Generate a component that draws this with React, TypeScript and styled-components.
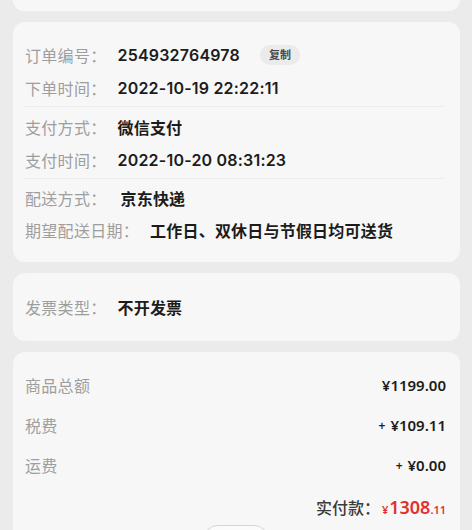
import styled, { createGlobalStyle } from "styled-components";

const GlobalStyle = createGlobalStyle`
  html, body {
    margin: 0;
    padding: 0;
    background: #ebebeb;
  }
  body {
    font-family: "Noto Sans", "Noto Sans CJK SC", sans-serif;
    -webkit-font-smoothing: antialiased;
  }
`;

type Row = { label: string; value: string; copy?: boolean; shift?: number };

const orderGroups: Row[][] = [
  [
    { label: "订单编号：", value: "254932764978", copy: true },
    { label: "下单时间：", value: "2022-10-19 22:22:11" },
  ],
  [
    { label: "支付方式：", value: "微信支付" },
    { label: "支付时间：", value: "2022-10-20 08:31:23" },
  ],
  [
    { label: "配送方式：", value: "京东快递", shift: 3 },
    { label: "期望配送日期：", value: "工作日、双休日与节假日均可送货" },
  ],
];

const fees = [
  { label: "商品总额", value: "¥1199.00" },
  { label: "税费", value: "¥109.11", plus: true },
  { label: "运费", value: "¥0.00", plus: true },
];

function App() {
  return (
    <>
      <GlobalStyle />
      <Page>
        <TopCard />

        <Card $pad="16px 16px 16px 12px">
          {orderGroups.map((group, gi) => (
            <Group key={gi} $divided={gi > 0}>
              {group.map((row) => (
                <InfoRow key={row.label} $h={gi === 2 ? 32 : 33}>
                  <Label>{row.label}</Label>
                  <Value $shift={row.shift}>{row.value}</Value>
                  {row.copy && <CopyTag>复制</CopyTag>}
                </InfoRow>
              ))}
            </Group>
          ))}
        </Card>

        <Card $pad="17px 16px 17px 12px">
          <InfoRow $h={34}>
            <Label>发票类型：</Label>
            <Value>不开发票</Value>
          </InfoRow>
        </Card>

        <Card $pad="13px 14px 0 12px">
          {fees.map((f) => (
            <FeeRow key={f.label}>
              <Label>{f.label}</Label>
              <FeeValue>
                {f.plus && <Plus>+</Plus>}
                {f.value}
              </FeeValue>
            </FeeRow>
          ))}
          <TotalRow>
            <TotalLabel>实付款：</TotalLabel>
            <Price>
              <Yen>¥</Yen>
              <Int>1308</Int>
              <Dec>.11</Dec>
            </Price>
          </TotalRow>
          <Actions>
            <OutlineButton aria-label="操作" />
          </Actions>
        </Card>
      </Page>
    </>
  );
}

const Page = styled.div`
  display: flex;
  flex-direction: column;
  gap: 11px;
  padding: 0 12px 0 13px;
  height: 530px;
  overflow: hidden;
`;

const TopCard = styled.div`
  height: 11px;
  flex-shrink: 0;
  background: #f7f7f7;
  border-radius: 0 0 12px 12px;
`;

const Card = styled.section<{ $pad: string }>`
  flex-shrink: 0;
  background: #f7f7f7;
  border-radius: 12px;
  padding: ${({ $pad }) => $pad};
`;

const Group = styled.div<{ $divided?: boolean }>`
  ${({ $divided }) =>
    $divided &&
    `
    margin-top: 2px;
    padding-top: 3px;
    border-top: 1px solid #ececec;
  `}
`;

const InfoRow = styled.div<{ $h: number }>`
  display: flex;
  align-items: center;
  height: ${({ $h }) => $h}px;
`;

const Label = styled.span`
  color: #9e9e9e;
  font-size: 16px;
  letter-spacing: 0.3px;
  white-space: nowrap;
`;

const Value = styled.span<{ $shift?: number }>`
  margin-left: ${({ $shift = 0 }) => 11 + $shift}px;
  color: #1c1c1c;
  font-family: Inter, "Noto Sans CJK SC", sans-serif;
  font-size: 16px;
  font-weight: 600;
  letter-spacing: 0.2px;
  white-space: nowrap;
`;

const CopyTag = styled.span`
  margin-left: 20px;
  padding: 0 9px;
  height: 20px;
  line-height: 20px;
  border-radius: 10px;
  background: #ebebeb;
  color: #4a4a4a;
  font-size: 11px;
  font-weight: 600;
`;

const FeeRow = styled.div`
  display: flex;
  align-items: center;
  justify-content: space-between;
  height: 40px;
`;

const FeeValue = styled.span`
  color: #1c1c1c;
  font-size: 15px;
  font-weight: 600;
`;

const Plus = styled.span`
  font-size: 12px;
  margin-right: 5px;
  vertical-align: 1px;
`;

const TotalRow = styled.div`
  display: flex;
  align-items: baseline;
  justify-content: flex-end;
  margin-top: 10px;
  height: 30px;
`;

const TotalLabel = styled.span`
  color: #3a3a3a;
  font-size: 16px;
  font-weight: 500;
`;

const Price = styled.span`
  color: #e2302c;
  font-weight: 600;
  margin-left: 2px;
`;

const Yen = styled.span`
  font-size: 11px;
  margin-right: 1px;
`;

const Int = styled.span`
  font-size: 18px;
`;

const Dec = styled.span`
  font-size: 11px;
`;

const Actions = styled.div`
  display: flex;
  justify-content: center;
`;

const OutlineButton = styled.button`
  width: 66px;
  height: 30px;
  border: 1px solid #d6d6d6;
  border-radius: 15px;
  background: #fbfbfb;
`;

export default App;
